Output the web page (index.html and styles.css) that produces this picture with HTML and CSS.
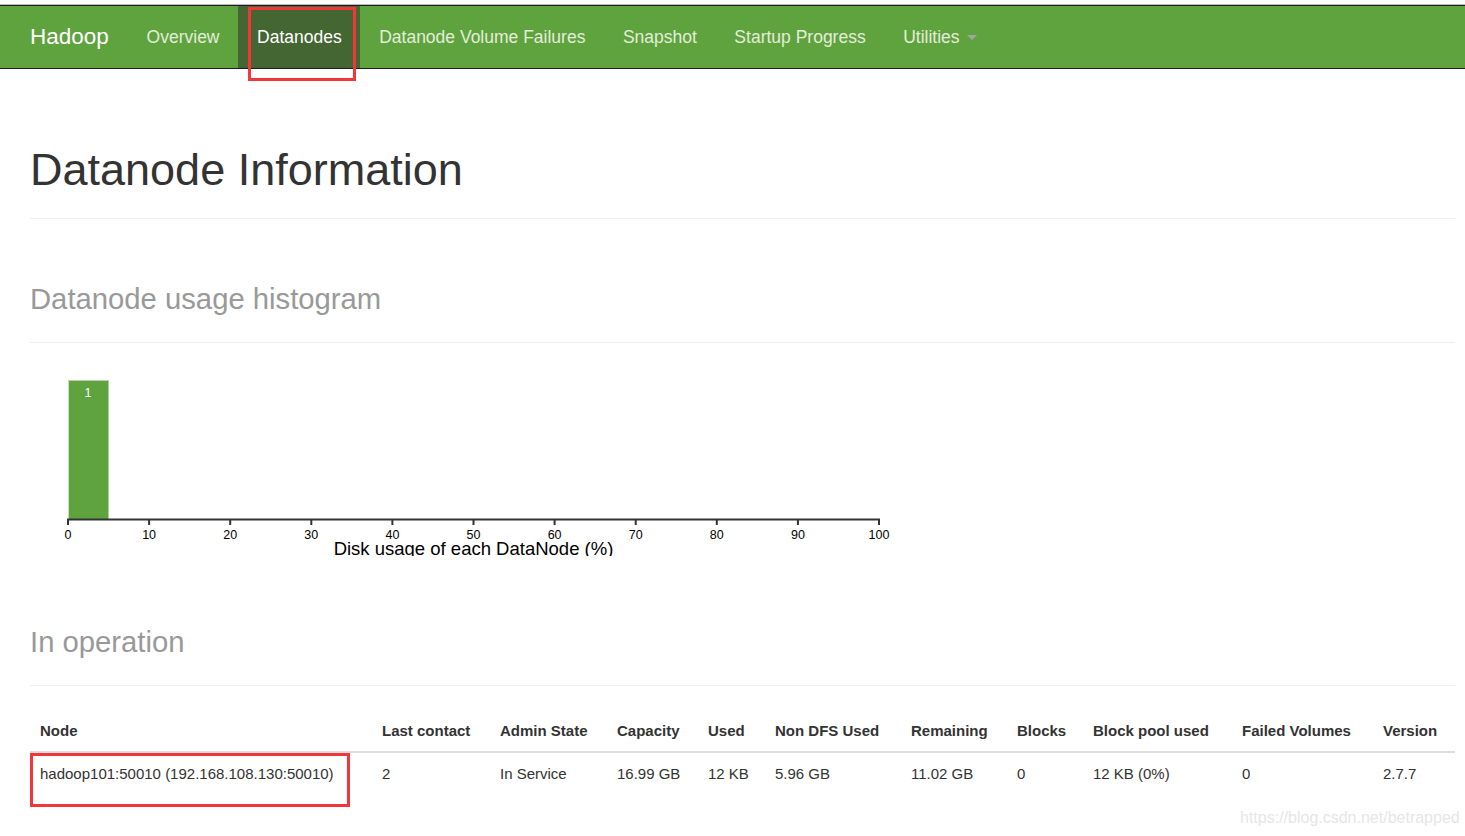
FILE: index.html
```html
<!DOCTYPE html>
<html>
<head>
<meta charset="utf-8">
<title>Datanode Information</title>
<link rel="stylesheet" href="styles.css">
</head>
<body>
<div class="topline"></div>
<nav class="navbar">
  <a class="brand">Hadoop</a>
  <ul class="nav">
    <li><a>Overview</a></li>
    <li class="active"><a>Datanodes</a><span class="mark mark-nav"></span></li>
    <li><a>Datanode Volume Failures</a></li>
    <li><a>Snapshot</a></li>
    <li><a>Startup Progress</a></li>
    <li><a>Utilities <span class="caret"></span></a></li>
  </ul>
</nav>
<main class="container">
  <div class="page-header first"><h1>Datanode Information</h1></div>
  <div class="page-header"><h1><small>Datanode usage histogram</small></h1></div>
  <svg class="histogram" width="900" height="213" viewBox="0 0 900 213">
    <rect x="38" y="37" width="40.5" height="139" fill="#5fa33e"/>
    <line x1="38.5" y1="37" x2="38.5" y2="176" stroke="#cfdcc7" stroke-width="1"/>
    <line x1="38" y1="37.5" x2="78.5" y2="37.5" stroke="#b9d3ab" stroke-width="1"/>
    <text x="58" y="53.5" class="bar-label">1</text>
    <path d="M38,182V176.5H849V182" fill="none" stroke="#333" stroke-width="2"/>
    <g class="ticks" stroke="#333" stroke-width="2">
      <line x1="119.1" y1="176" x2="119.1" y2="182"/>
      <line x1="200.2" y1="176" x2="200.2" y2="182"/>
      <line x1="281.3" y1="176" x2="281.3" y2="182"/>
      <line x1="362.4" y1="176" x2="362.4" y2="182"/>
      <line x1="443.5" y1="176" x2="443.5" y2="182"/>
      <line x1="524.6" y1="176" x2="524.6" y2="182"/>
      <line x1="605.7" y1="176" x2="605.7" y2="182"/>
      <line x1="686.8" y1="176" x2="686.8" y2="182"/>
      <line x1="767.9" y1="176" x2="767.9" y2="182"/>
    </g>
    <g class="tick-labels">
      <text x="38" y="195.5">0</text>
      <text x="119.1" y="195.5">10</text>
      <text x="200.2" y="195.5">20</text>
      <text x="281.3" y="195.5">30</text>
      <text x="362.4" y="195.5">40</text>
      <text x="443.5" y="195.5">50</text>
      <text x="524.6" y="195.5">60</text>
      <text x="605.7" y="195.5">70</text>
      <text x="686.8" y="195.5">80</text>
      <text x="767.9" y="195.5">90</text>
      <text x="849" y="195.5">100</text>
    </g>
    <text x="443.5" y="212" class="axis-label">Disk usage of each DataNode (%)</text>
  </svg>
  <div class="page-header third"><h1><small>In operation</small></h1></div>
  <table class="nodes">
    <colgroup>
      <col style="width:342px"><col style="width:118px"><col style="width:117px"><col style="width:91px"><col style="width:67px"><col style="width:136px"><col style="width:106px"><col style="width:76px"><col style="width:149px"><col style="width:141px"><col style="width:82px">
    </colgroup>
    <thead>
      <tr>
        <th>Node</th><th>Last contact</th><th>Admin State</th><th>Capacity</th><th>Used</th><th>Non DFS Used</th><th>Remaining</th><th>Blocks</th><th>Block pool used</th><th>Failed Volumes</th><th>Version</th>
      </tr>
    </thead>
    <tbody>
      <tr>
        <td class="node-cell">hadoop101:50010 (192.168.108.130:50010)<span class="mark mark-cell"></span></td>
        <td>2</td><td>In Service</td><td>16.99 GB</td><td>12 KB</td><td>5.96 GB</td><td>11.02 GB</td><td>0</td><td>12 KB (0%)</td><td>0</td><td>2.7.7</td>
      </tr>
    </tbody>
  </table>
</main>
<div class="watermark">https://blog.csdn.net/betrapped</div>
</body>
</html>
```
FILE: styles.css
```css
html, body {
  margin: 0;
  padding: 0;
  overflow: hidden;
}
body {
  font-family: "Liberation Sans", Arial, sans-serif;
  color: #333;
  background: #fff;
  position: relative;
  height: 836px;
}
.topline {
  height: 4px;
  border-bottom: 1px solid #b8b8b8;
}
.navbar {
  display: flex;
  align-items: stretch;
  height: 62px;
  background: #5fa33e;
  border-top: 1px solid #1e1e1e;
  border-bottom: 1px solid #1e1e1e;
  padding-left: 30px;
}
.brand {
  display: flex;
  align-items: center;
  font-size: 22.5px;
  color: #fff;
  padding-right: 19px;
}
.nav {
  display: flex;
  list-style: none;
  margin: 0;
  padding: 0;
}
.nav li {
  position: relative;
  display: flex;
  align-items: center;
  padding: 0 18.75px;
  font-size: 17.5px;
  color: #e3edd9;
}
.nav li.active {
  background: #436633;
  color: #fff;
}
.caret {
  display: inline-block;
  width: 0;
  height: 0;
  margin-left: 3px;
  vertical-align: middle;
  border-top: 5px solid #a3a3a3;
  border-left: 5px solid transparent;
  border-right: 5px solid transparent;
}
.mark {
  position: absolute;
  border: 3px solid #f2363b;
  box-sizing: border-box;
  pointer-events: none;
}
.mark-nav {
  left: 10px;
  top: 1px;
  width: 108px;
  height: 74px;
}
.container {
  margin-left: 30px;
  width: 1425px;
}
.page-header {
  border-bottom: 1px solid #eee;
  padding-bottom: 11px;
  margin-top: 50px;
}
.page-header.first {
  margin-top: 76px;
}
.page-header.third {
  margin-top: 56px;
}
.page-header h1 {
  margin: 0 0 12px;
  font-size: 45px;
  font-weight: normal;
  line-height: 50px;
  color: #333;
}
.page-header h1 small {
  font-size: 29.25px;
  line-height: 1;
  color: #999;
}
.histogram {
  display: block;
  overflow: hidden;
}
.bar-label {
  fill: #fff;
  font-size: 12.5px;
  text-anchor: middle;
  font-family: "Liberation Sans", Arial, sans-serif;
}
.tick-labels text {
  font-size: 12.5px;
  fill: #000;
  text-anchor: middle;
  font-family: "Liberation Sans", Arial, sans-serif;
}
.axis-label {
  font-size: 18.5px;
  fill: #000;
  text-anchor: middle;
  font-family: "Liberation Sans", Arial, sans-serif;
}
.nodes {
  margin-top: 24px;
  width: 1425px;
  table-layout: fixed;
  border-collapse: collapse;
  font-size: 15px;
  line-height: 21px;
}
.nodes th {
  text-align: left;
  font-weight: bold;
  padding: 10px;
  border-bottom: 2px solid #ddd;
  white-space: nowrap;
}
.nodes td {
  padding: 10px;
  white-space: nowrap;
}
.node-cell {
  position: relative;
}
.mark-cell {
  left: 0;
  top: 0;
  width: 320px;
  height: 54px;
}
.watermark {
  position: absolute;
  left: 1240px;
  top: 808px;
  font-size: 16px;
  line-height: 20px;
  color: #e6e6e6;
  white-space: nowrap;
}
```
